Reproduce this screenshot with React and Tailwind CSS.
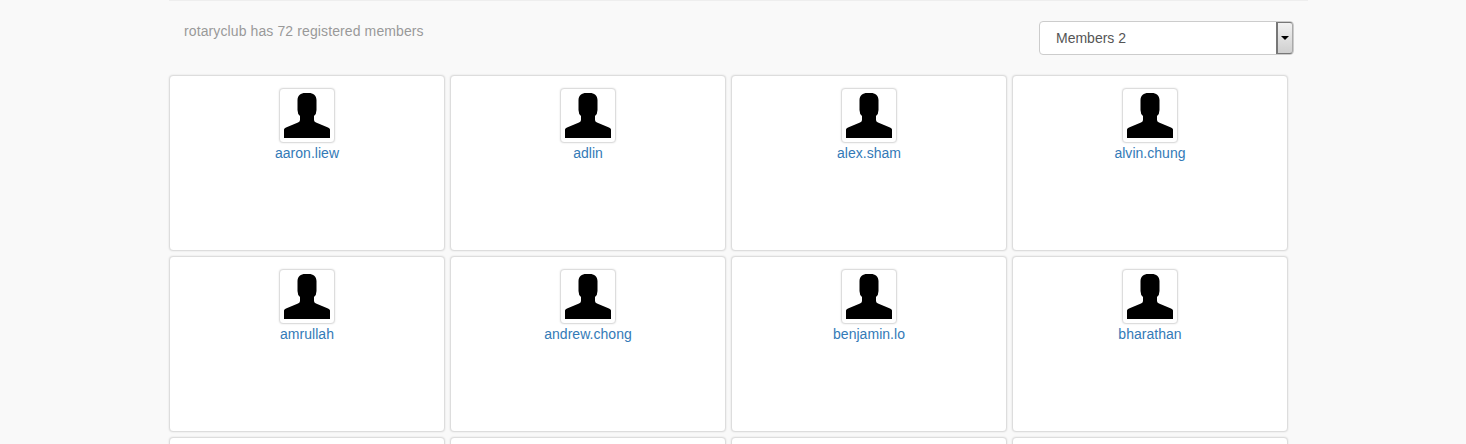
const members = [
  'aaron.liew', 'adlin', 'alex.sham', 'alvin.chung',
  'amrullah', 'andrew.chong', 'benjamin.lo', 'bharathan',
  '', '', '', '',
];

function Silhouette() {
  return (
    <svg width="46" height="45" viewBox="0 0 46 45" className="block">
      <path
        d="M0 45V36.5Q0 35.5 2 34.5L14 29.5Q16 28.5 16 27V23Q13.5 21 13.5 17V7C13.5 2.5 17 0 21 0H25C29 0 32.5 2.5 32.5 7V17Q32.5 21 30 23V27Q30 28.5 32 29.5L44 34.5Q46 35.5 46 36.5V45Z"
        fill="#000"
      />
    </svg>
  );
}

function MemberCard({ name }) {
  return (
    <div className="h-[176px] w-[276px] rounded-[4px] border border-[#dddddd] bg-white pt-3 shadow-[0_0_2px_rgba(0,0,0,0.12)]">
      {name && (
        <div className="flex flex-col items-center">
          <div className="rounded-[4px] border border-[#dddddd] bg-white p-1 shadow-[0_0_2px_rgba(0,0,0,0.12)]">
            <Silhouette />
          </div>
          <a href="#" className="text-[14px] leading-[20px] tracking-[0.03px] text-[#337ab7]">
            {name}
          </a>
        </div>
      )}
    </div>
  );
}

export default function App() {
  return (
    <div className="h-[444px] overflow-hidden bg-[#f9f9f9] font-['Liberation_Sans',Arial,sans-serif]">
      <div className="ml-[169px] w-[1139px] border-t border-[#eeeeee]">
        <div className="flex items-start justify-between pb-5 pl-[15px] pr-[14px] pt-5">
          <p className="text-[14px] leading-[20px] tracking-[0.11px] text-[#999999]">
            rotaryclub has 72 registered members
          </p>
          <div className="flex h-[34px] w-[255px] items-stretch rounded-[4px] border border-[#cccccc] bg-white">
            <span className="flex-1 pl-4 text-[14px] leading-[33px] text-[#555555]">Members 2</span>
            <span className="flex w-[17px] items-center justify-center rounded-r-[3px] border-y border-l-2 border-r border-[#777777] border-r-[#aaaaaa] bg-gradient-to-b from-[#f2f2f2] to-[#cfcfcf]">
              <svg width="8" height="4" viewBox="0 0 8 4">
                <path d="M0 0H8L4 4Z" fill="#000" />
              </svg>
            </span>
          </div>
        </div>
        <div className="grid grid-cols-[repeat(4,276px)] gap-[5px]">
          {members.map((name, i) => (
            <MemberCard key={i} name={name} />
          ))}
        </div>
      </div>
    </div>
  );
}
